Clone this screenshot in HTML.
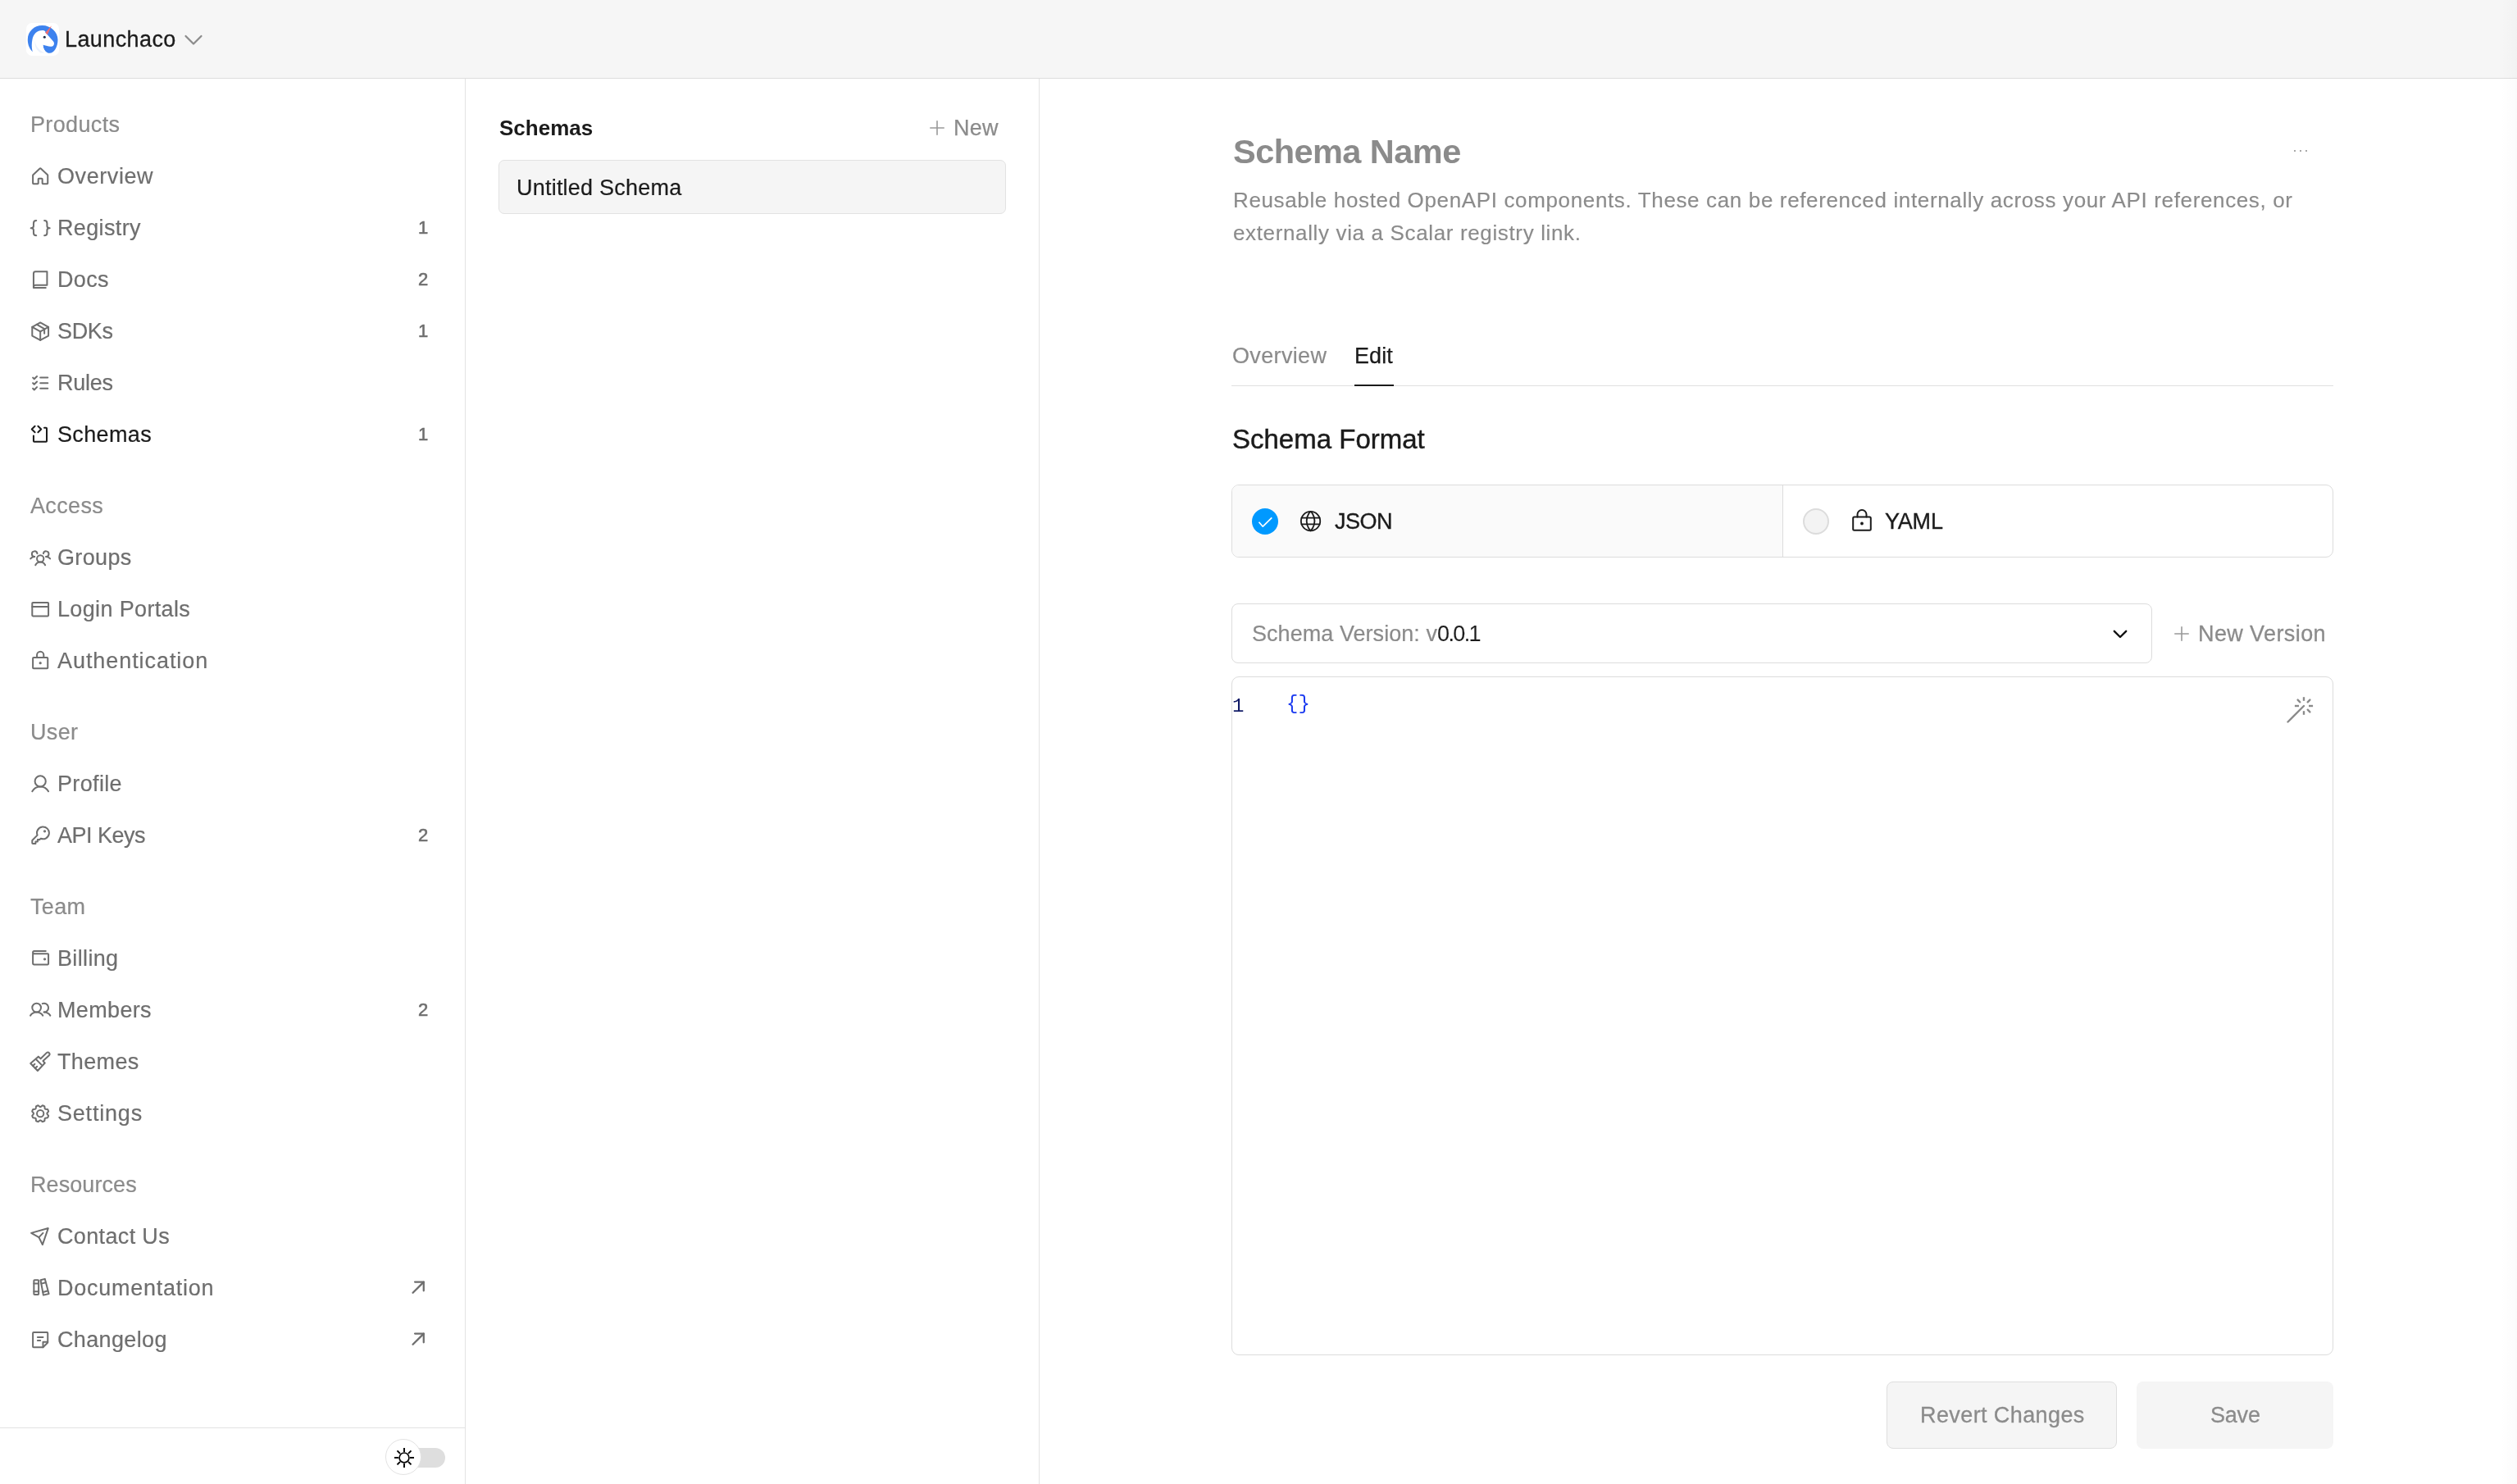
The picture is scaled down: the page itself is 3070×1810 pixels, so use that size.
<!DOCTYPE html>
<html><head><meta charset="utf-8"><title>Schemas</title>
<style>
html,body{margin:0;padding:0;overflow:hidden;}
body{width:3070px;height:1810px;overflow:hidden;position:relative;background:#fff;font-family:"Liberation Sans", sans-serif;}
.t{position:absolute;white-space:nowrap;line-height:1;will-change:transform;}
.r{position:absolute;}
.i{position:absolute;overflow:visible;}
@media (max-width:2000px){html{zoom:0.5;}}
</style></head><body>
<div class="r" style="left:0px;top:0px;width:3070px;height:95px;background:#f6f6f6"></div>
<div class="r" style="left:0px;top:95px;width:3070px;height:1px;background:#dedede"></div>
<div class="r" style="left:32px;top:28px;width:40px;height:40px;background:#fff;border-radius:7px"></div>
<svg class="i" style="left:32px;top:28px" width="40" height="40" viewBox="32 28 40 40">
<path d="M39.6 63 C35 58.5 33.8 53 33.8 48 C33.8 38.5 41.5 31 51.5 31 C62 31 70.5 39 70.5 48.5 C70.5 57.5 66 64.8 60.5 64.8 C56.3 64.8 52.8 60.5 52.3 54.7 C47 56 41 60 39.6 63 Z" fill="#3d82ee"/>
<path d="M39.6 62.4 C38.4 58 38.6 52.5 39.4 48.5 C40.5 41.5 45.5 37.2 51.5 37.1 C53 37.1 54.5 37.6 55.3 38.2 L55.2 39.6 L57.8 42.2 L64.8 50.3 C66.6 52.2 66.3 55.2 64.4 56.2 C62.5 57.1 59.6 56.8 57.4 56.1 L52.4 54.8 C52.6 59.5 54.8 62.8 57.5 64.6 L41 64.6 Z" fill="#ffffff"/>
<path d="M42.6 49.5 C43.3 56 47.5 61.5 54.5 64.4 L49.5 64.4 C44.5 61.5 41.8 56.5 42.6 49.5 Z" fill="#edf3fd"/>
<path d="M55.2 39.8 L62.9 31.2 L57.9 42.4 Z" fill="#ee6e72"/>
<circle cx="54.3" cy="45.3" r="1.5" fill="#1d2a44"/>
</svg>
<div class="t" style="left:79.0px;top:35.1px;font-size:27px;color:#1b1b1b;font-weight:400;letter-spacing:0.4px;-webkit-text-stroke:0.3px #1b1b1b">Launchaco</div>
<svg class="i" style="left:225px;top:42px;" width="22" height="14" viewBox="0 0 22 14" fill="none" stroke="#8b8b8b" stroke-width="2.2" stroke-linecap="round" stroke-linejoin="round"><path d="M1.5 2 L11 11.5 L20.5 2"/></svg>
<div class="r" style="left:567px;top:96px;width:1px;height:1714px;background:#e3e3e3"></div>
<div class="r" style="left:1267px;top:96px;width:1px;height:1714px;background:#e3e3e3"></div>
<div class="r" style="left:0px;top:1741px;width:567px;height:1px;background:#e3e3e3"></div>
<div class="r" style="left:3050px;top:0px;width:20px;height:1810px;background:linear-gradient(to right, rgba(0,0,0,0), rgba(0,0,0,0.015))"></div>
<div class="t" style="left:36.5px;top:138.8px;font-size:27px;color:#8b8b8b;font-weight:400;letter-spacing:0.35px;-webkit-text-stroke:0.2px #8b8b8b">Products</div>
<svg class="i" style="left:35.70px;top:201.80px" width="26.37" height="26.37" viewBox="0 0 256 256" fill="none" stroke="#6e6e6e" stroke-width="19.5" stroke-linecap="round" stroke-linejoin="round"><path d="M152,208V160a8,8,0,0,0-8-8H112a8,8,0,0,0-8,8v48a8,8,0,0,1-8,8H48a8,8,0,0,1-8-8V115.54a8,8,0,0,1,2.62-5.92l80-75.54a8,8,0,0,1,10.77,0l80,75.54a8,8,0,0,1,2.62,5.92V208a8,8,0,0,1-8,8H160A8,8,0,0,1,152,208Z"/></svg>
<div class="t" style="left:70.0px;top:201.8px;font-size:27px;color:#6e6e6e;font-weight:400;letter-spacing:0.58px;-webkit-text-stroke:0.2px #6e6e6e">Overview</div>
<svg class="i" style="left:35.70px;top:264.80px" width="26.37" height="26.37" viewBox="0 0 256 256" fill="none" stroke="#6e6e6e" stroke-width="19.5" stroke-linecap="round" stroke-linejoin="round"><path d="M80,40C56,40 48,48 48,72V104C48,120 40,128 16,128C40,128 48,136 48,152V184C48,208 56,216 80,216"/><path d="M176,40C200,40 208,48 208,72V104C208,120 216,128 240,128C216,128 208,136 208,152V184C208,208 200,216 176,216"/></svg>
<div class="t" style="left:70.0px;top:264.8px;font-size:27px;color:#6e6e6e;font-weight:400;letter-spacing:0.35px;-webkit-text-stroke:0.2px #6e6e6e">Registry</div>
<div class="t" style="left:510.3px;top:266.6px;font-size:22px;color:#6e6e6e;font-weight:400;letter-spacing:0px;-webkit-text-stroke:0.55px #6e6e6e">1</div>
<svg class="i" style="left:35.70px;top:327.80px" width="26.37" height="26.37" viewBox="0 0 256 256" fill="none" stroke="#6e6e6e" stroke-width="19.5" stroke-linecap="round" stroke-linejoin="round"><path d="M48,216a24,24,0,0,1,24-24H208V32H72A24,24,0,0,0,48,56Z"/><path d="M48,216v8H192"/></svg>
<div class="t" style="left:70.0px;top:327.8px;font-size:27px;color:#6e6e6e;font-weight:400;letter-spacing:0.35px;-webkit-text-stroke:0.2px #6e6e6e">Docs</div>
<div class="t" style="left:510.3px;top:329.6px;font-size:22px;color:#6e6e6e;font-weight:400;letter-spacing:0px;-webkit-text-stroke:0.55px #6e6e6e">2</div>
<svg class="i" style="left:35.70px;top:390.80px" width="26.37" height="26.37" viewBox="0 0 256 256" fill="none" stroke="#6e6e6e" stroke-width="19.5" stroke-linecap="round" stroke-linejoin="round"><path d="M128,24L224,76V180L128,232L32,180V76Z"/><path d="M32,76L128,129L224,76"/><path d="M128,129V232"/><path d="M84,46L176,98V152"/></svg>
<div class="t" style="left:70.0px;top:390.8px;font-size:27px;color:#6e6e6e;font-weight:400;letter-spacing:-0.33px;-webkit-text-stroke:0.2px #6e6e6e">SDKs</div>
<div class="t" style="left:510.3px;top:392.6px;font-size:22px;color:#6e6e6e;font-weight:400;letter-spacing:0px;-webkit-text-stroke:0.55px #6e6e6e">1</div>
<svg class="i" style="left:35.70px;top:453.80px" width="26.37" height="26.37" viewBox="0 0 256 256" fill="none" stroke="#6e6e6e" stroke-width="19.5" stroke-linecap="round" stroke-linejoin="round"><path d="M128,128h88"/><path d="M128,64h88"/><path d="M128,192h88"/><path d="M40,64l16,16L88,48"/><path d="M40,128l16,16,32-32"/><path d="M40,192l16,16,32-32"/></svg>
<div class="t" style="left:70.0px;top:453.8px;font-size:27px;color:#6e6e6e;font-weight:400;letter-spacing:-0.27px;-webkit-text-stroke:0.2px #6e6e6e">Rules</div>
<svg class="i" style="left:35.70px;top:516.80px" width="26.37" height="26.37" viewBox="0 0 256 256" fill="none" stroke="#1b1b1b" stroke-width="19.5" stroke-linecap="round" stroke-linejoin="round"><path d="M64,27L27,63L64,99"/><path d="M101,27L138,63L101,99"/><path d="M175,47H196a8,8,0,0,1,8,8V203a8,8,0,0,1-8,8H56a8,8,0,0,1-8-8V140"/></svg>
<div class="t" style="left:70.0px;top:516.8px;font-size:27px;color:#1b1b1b;font-weight:400;letter-spacing:0.35px;-webkit-text-stroke:0.2px #1b1b1b">Schemas</div>
<div class="t" style="left:510.3px;top:518.6px;font-size:22px;color:#6e6e6e;font-weight:400;letter-spacing:0px;-webkit-text-stroke:0.55px #6e6e6e">1</div>
<div class="t" style="left:36.5px;top:603.8px;font-size:27px;color:#8b8b8b;font-weight:400;letter-spacing:0.35px;-webkit-text-stroke:0.2px #8b8b8b">Access</div>
<svg class="i" style="left:35.70px;top:667.30px" width="26.37" height="26.37" viewBox="0 0 256 256" fill="none" stroke="#6e6e6e" stroke-width="19.5" stroke-linecap="round" stroke-linejoin="round"><circle cx="128" cy="140" r="40"/><path d="M196,116a59.8,59.8,0,0,1,48,24"/><path d="M12,140a59.8,59.8,0,0,1,48-24"/><path d="M70.4,216a64.07,64.07,0,0,1,115.2,0"/><path d="M60,116A32,32,0,1,1,91.6,78.78"/><path d="M164.4,78.78A32,32,0,1,1,196,116"/></svg>
<div class="t" style="left:70.0px;top:666.8px;font-size:27px;color:#6e6e6e;font-weight:400;letter-spacing:0.35px;-webkit-text-stroke:0.2px #6e6e6e">Groups</div>
<svg class="i" style="left:35.70px;top:729.80px" width="26.37" height="26.37" viewBox="0 0 256 256" fill="none" stroke="#6e6e6e" stroke-width="19.5" stroke-linecap="round" stroke-linejoin="round"><rect x="32" y="48" width="192" height="160" rx="8"/><path d="M32,96H224"/></svg>
<div class="t" style="left:70.0px;top:729.8px;font-size:27px;color:#6e6e6e;font-weight:400;letter-spacing:0.35px;-webkit-text-stroke:0.2px #6e6e6e">Login Portals</div>
<svg class="i" style="left:35.70px;top:792.80px" width="26.37" height="26.37" viewBox="0 0 256 256" fill="none" stroke="#6e6e6e" stroke-width="19.5" stroke-linecap="round" stroke-linejoin="round"><rect x="40" y="88" width="176" height="128" rx="8"/><path d="M88,88V56a40,40,0,0,1,80,0V88"/><circle cx="128" cy="152" r="6" fill="#6e6e6e"/></svg>
<div class="t" style="left:70.0px;top:792.8px;font-size:27px;color:#6e6e6e;font-weight:400;letter-spacing:0.93px;-webkit-text-stroke:0.2px #6e6e6e">Authentication</div>
<div class="t" style="left:36.5px;top:879.8px;font-size:27px;color:#8b8b8b;font-weight:400;letter-spacing:0.35px;-webkit-text-stroke:0.2px #8b8b8b">User</div>
<svg class="i" style="left:35.70px;top:942.80px" width="26.37" height="26.37" viewBox="0 0 256 256" fill="none" stroke="#6e6e6e" stroke-width="19.5" stroke-linecap="round" stroke-linejoin="round"><circle cx="128" cy="96" r="64"/><path d="M32,216c19.37-33.47,54.55-56,96-56s76.63,22.53,96,56"/></svg>
<div class="t" style="left:70.0px;top:942.8px;font-size:27px;color:#6e6e6e;font-weight:400;letter-spacing:0.35px;-webkit-text-stroke:0.2px #6e6e6e">Profile</div>
<svg class="i" style="left:35.70px;top:1005.80px" width="26.37" height="26.37" viewBox="0 0 256 256" fill="none" stroke="#6e6e6e" stroke-width="19.5" stroke-linecap="round" stroke-linejoin="round"><path d="M93.17,122.83a72,72,0,1,1,40,40h0L120,176H96v24H72v24H40a8,8,0,0,1-8-8V187.31a8,8,0,0,1,2.34-5.65l58.83-58.83Z"/><circle cx="180" cy="76" r="6" fill="#6e6e6e"/></svg>
<div class="t" style="left:70.0px;top:1005.8px;font-size:27px;color:#6e6e6e;font-weight:400;letter-spacing:-0.5px;-webkit-text-stroke:0.2px #6e6e6e">API Keys</div>
<div class="t" style="left:510.3px;top:1007.6px;font-size:22px;color:#6e6e6e;font-weight:400;letter-spacing:0px;-webkit-text-stroke:0.55px #6e6e6e">2</div>
<div class="t" style="left:36.5px;top:1092.8px;font-size:27px;color:#8b8b8b;font-weight:400;letter-spacing:0.35px;-webkit-text-stroke:0.2px #8b8b8b">Team</div>
<svg class="i" style="left:35.70px;top:1154.80px" width="26.37" height="26.37" viewBox="0 0 256 256" fill="none" stroke="#6e6e6e" stroke-width="19.5" stroke-linecap="round" stroke-linejoin="round"><path d="M40,64V192a16,16,0,0,0,16,16H216a8,8,0,0,0,8-8V88a8,8,0,0,0-8-8H56A16,16,0,0,1,40,64h0A16,16,0,0,1,56,48H192"/><circle cx="180" cy="144" r="6" fill="#6e6e6e"/></svg>
<div class="t" style="left:70.0px;top:1155.8px;font-size:27px;color:#6e6e6e;font-weight:400;letter-spacing:0.35px;-webkit-text-stroke:0.2px #6e6e6e">Billing</div>
<svg class="i" style="left:35.70px;top:1218.20px" width="26.37" height="26.37" viewBox="0 0 256 256" fill="none" stroke="#6e6e6e" stroke-width="19.5" stroke-linecap="round" stroke-linejoin="round"><circle cx="84" cy="108" r="52"/><path d="M10.23,200a88,88,0,0,1,147.54,0"/><path d="M172,160a87.93,87.93,0,0,1,73.77,40"/><path d="M152.69,59.7A52,52,0,1,1,172,160"/></svg>
<div class="t" style="left:70.0px;top:1218.8px;font-size:27px;color:#6e6e6e;font-weight:400;letter-spacing:0.35px;-webkit-text-stroke:0.2px #6e6e6e">Members</div>
<div class="t" style="left:510.3px;top:1220.6px;font-size:22px;color:#6e6e6e;font-weight:400;letter-spacing:0px;-webkit-text-stroke:0.55px #6e6e6e">2</div>
<svg class="i" style="left:35.70px;top:1280.40px" width="26.37" height="26.37" viewBox="0 0 256 256" fill="none" stroke="#6e6e6e" stroke-width="19.5" stroke-linecap="round" stroke-linejoin="round"><path d="M12,165L105,84L132,110L202,40C211,31 225,32 232,41C240,50 240,62 232,70L160,137L182,160L96,253Z"/><path d="M82,122L141,181"/><path d="M40,194L62,172"/><path d="M67,223L89,201"/></svg>
<div class="t" style="left:70.0px;top:1281.8px;font-size:27px;color:#6e6e6e;font-weight:400;letter-spacing:0.35px;-webkit-text-stroke:0.2px #6e6e6e">Themes</div>
<svg class="i" style="left:35.70px;top:1344.60px" width="26.37" height="26.37" viewBox="0 0 256 256" fill="none" stroke="#6e6e6e" stroke-width="19.5" stroke-linecap="round" stroke-linejoin="round"><circle cx="128" cy="128" r="40"/><path d="M41.43,178.09A99.14,99.14,0,0,1,31.36,153.8l16.78-21a81.59,81.59,0,0,1,0-9.64l-16.77-21a99.43,99.43,0,0,1,10.05-24.3l26.71-3a81,81,0,0,1,6.81-6.81l3-26.7A99.14,99.14,0,0,1,102.2,31.36l21,16.78a81.59,81.59,0,0,1,9.64,0l21-16.77a99.43,99.43,0,0,1,24.3,10.05l3,26.71a81,81,0,0,1,6.81,6.81l26.7,3a99.14,99.14,0,0,1,10.07,24.29l-16.78,21a81.59,81.59,0,0,1,0,9.64l16.77,21a99.43,99.43,0,0,1-10,24.3l-26.71,3a81,81,0,0,1-6.81,6.81l-3,26.7a99.14,99.14,0,0,1-24.29,10.07l-21-16.78a81.59,81.59,0,0,1-9.64,0l-21,16.77a99.43,99.43,0,0,1-24.3-10l-3-26.71a81,81,0,0,1-6.81-6.81Z"/></svg>
<div class="t" style="left:70.0px;top:1344.8px;font-size:27px;color:#6e6e6e;font-weight:400;letter-spacing:0.8px;-webkit-text-stroke:0.2px #6e6e6e">Settings</div>
<div class="t" style="left:36.5px;top:1431.8px;font-size:27px;color:#8b8b8b;font-weight:400;letter-spacing:0.08px;-webkit-text-stroke:0.2px #8b8b8b">Resources</div>
<svg class="i" style="left:35.70px;top:1494.80px" width="26.37" height="26.37" viewBox="0 0 256 256" fill="none" stroke="#6e6e6e" stroke-width="19.5" stroke-linecap="round" stroke-linejoin="round"><path d="M221,30L20,86L111,137L154,224Z"/><path d="M111,137L160,86"/></svg>
<div class="t" style="left:70.0px;top:1494.8px;font-size:27px;color:#6e6e6e;font-weight:400;letter-spacing:0.35px;-webkit-text-stroke:0.2px #6e6e6e">Contact Us</div>
<svg class="i" style="left:35.70px;top:1557.80px" width="26.37" height="26.37" viewBox="0 0 256 256" fill="none" stroke="#6e6e6e" stroke-width="19.5" stroke-linecap="round" stroke-linejoin="round"><rect x="52" y="32" width="56" height="172" rx="8"/><path d="M52,72H108"/><path d="M52,168H108"/><path d="M131,32L182,18L229,194L164,210Z"/><path d="M141,74L192,60"/><path d="M159,174L212,160"/></svg>
<div class="t" style="left:70.0px;top:1557.8px;font-size:27px;color:#6e6e6e;font-weight:400;letter-spacing:0.75px;-webkit-text-stroke:0.2px #6e6e6e">Documentation</div>
<svg class="i" style="left:496.70px;top:1556.90px" width="26.37" height="26.37" viewBox="0 0 256 256" fill="none" stroke="#6e6e6e" stroke-width="22" stroke-linecap="round" stroke-linejoin="round"><path d="M64,192,192,64"/><path d="M88,64H192V168"/></svg>
<svg class="i" style="left:35.70px;top:1620.80px" width="26.37" height="26.37" viewBox="0 0 256 256" fill="none" stroke="#6e6e6e" stroke-width="19.5" stroke-linecap="round" stroke-linejoin="round"><path d="M156.69,216H48a8,8,0,0,1-8-8V48a8,8,0,0,1,8-8H208a8,8,0,0,1,8,8V156.69a8,8,0,0,1-2.34,5.65l-51.32,51.32A8,8,0,0,1,156.69,216Z"/><path d="M96,96h64"/><path d="M96,136h32"/><path d="M215.28,152H160v63.28"/></svg>
<div class="t" style="left:70.0px;top:1620.8px;font-size:27px;color:#6e6e6e;font-weight:400;letter-spacing:0.35px;-webkit-text-stroke:0.2px #6e6e6e">Changelog</div>
<svg class="i" style="left:496.70px;top:1619.90px" width="26.37" height="26.37" viewBox="0 0 256 256" fill="none" stroke="#6e6e6e" stroke-width="22" stroke-linecap="round" stroke-linejoin="round"><path d="M64,192,192,64"/><path d="M88,64H192V168"/></svg>
<div class="r" style="left:478px;top:1766px;width:65px;height:24px;background:#dedede;border-radius:12px"></div>
<div class="r" style="left:470px;top:1755px;width:44px;height:44px;border-radius:50%;background:#fff;border:1px solid #e2e2e2;box-sizing:border-box"></div>
<svg class="i" style="left:479px;top:1764px;stroke-linecap:butt" width="28" height="28" viewBox="479 1764 28 28" fill="none" stroke="#000" stroke-width="1.9" stroke-linecap="round" stroke-linejoin="round"><circle cx="493" cy="1777.9" r="5.9" stroke-width="1.7"/><path d="M493 1765.9 V1770.9"/><path d="M493 1784.9 V1789.9"/><path d="M481 1777.9 H486"/><path d="M500 1777.9 H505"/><path d="M484.5 1769.4 L488 1772.9"/><path d="M498 1782.9 L501.5 1786.4"/><path d="M484.5 1786.4 L488 1782.9"/><path d="M498 1772.9 L501.5 1769.4"/></svg>
<div class="t" style="left:609.0px;top:143.2px;font-size:26px;color:#1b1b1b;font-weight:700;letter-spacing:0px;">Schemas</div>
<svg class="i" style="left:1134px;top:147px;" width="18" height="18" viewBox="0 0 18 18" fill="none" stroke="#999" stroke-width="1.6" stroke-linecap="round" stroke-linejoin="round"><path d="M9 0.8 V17.2"/><path d="M0.8 9 H17.2"/></svg>
<div class="t" style="left:1163.0px;top:142.7px;font-size:27px;color:#8b8b8b;font-weight:400;letter-spacing:0.3px;-webkit-text-stroke:0.25px #8b8b8b">New</div>
<div class="r" style="left:608px;top:195px;width:619px;height:66px;background:#f5f5f5;border:1px solid #e2e2e2;border-radius:7px;box-sizing:border-box"></div>
<div class="t" style="left:630.0px;top:215.9px;font-size:27px;color:#1b1b1b;font-weight:400;letter-spacing:0.22px;-webkit-text-stroke:0.2px #1b1b1b">Untitled Schema</div>
<div class="t" style="left:1504.0px;top:164.1px;font-size:41.5px;color:#8b8b8b;font-weight:700;letter-spacing:-0.55px;">Schema Name</div>
<div class="r" style="left:2798px;top:183px;width:2px;height:2px;background:#8b8b8b;border-radius:1px"></div>
<div class="r" style="left:2805px;top:183px;width:2px;height:2px;background:#8b8b8b;border-radius:1px"></div>
<div class="r" style="left:2812px;top:183px;width:2px;height:2px;background:#8b8b8b;border-radius:1px"></div>
<div class="t" style="left:1503.5px;top:231.3px;font-size:26px;color:#8b8b8b;font-weight:400;letter-spacing:0.64px;-webkit-text-stroke:0.15px #8b8b8b">Reusable hosted OpenAPI components. These can be referenced internally across your API references, or</div>
<div class="t" style="left:1503.5px;top:270.6px;font-size:26px;color:#8b8b8b;font-weight:400;letter-spacing:0.64px;-webkit-text-stroke:0.15px #8b8b8b">externally via a Scalar registry link.</div>
<div class="t" style="left:1503.0px;top:420.6px;font-size:27px;color:#8b8b8b;font-weight:400;letter-spacing:0.35px;-webkit-text-stroke:0.2px #8b8b8b">Overview</div>
<div class="t" style="left:1651.5px;top:420.6px;font-size:27px;color:#1b1b1b;font-weight:400;letter-spacing:0.1px;-webkit-text-stroke:0.25px #1b1b1b">Edit</div>
<div class="r" style="left:1502px;top:470px;width:1344px;height:1px;background:#e0e0e0"></div>
<div class="r" style="left:1652px;top:469px;width:48px;height:2px;background:#1b1b1b"></div>
<div class="t" style="left:1503.0px;top:519.1px;font-size:33px;color:#1b1b1b;font-weight:400;letter-spacing:0.0px;-webkit-text-stroke:0.45px #1b1b1b">Schema Format</div>
<div class="r" style="left:1502px;top:591px;width:1344px;height:89px;border:1px solid #dcdcdc;border-radius:9px;box-sizing:border-box;overflow:hidden;background:#fff"><div style="position:absolute;left:0;top:0;width:671px;height:100%;background:#fafafa;border-right:1px solid #dcdcdc"></div></div>
<div class="r" style="left:1527px;top:620px;width:32px;height:32px;border-radius:50%;background:#0099ff"></div>
<svg class="i" style="left:1527px;top:620px;stroke-linecap:butt" width="32" height="32" viewBox="0 0 32 32" fill="none" stroke="#fff" stroke-width="1.7" stroke-linecap="round" stroke-linejoin="round"><path d="M8.5 16.8 L13.3 22.2 L24.3 11.3"/></svg>
<svg class="i" style="left:1583.44px;top:620.44px" width="31.13" height="31.13" viewBox="0 0 256 256" fill="none" stroke="#1b1b1b" stroke-width="15" stroke-linecap="round" stroke-linejoin="round"><circle cx="128" cy="128" r="96"/><path d="M37.46,96H218.54"/><path d="M37.46,160H218.54"/><path d="M168,128c0,64-40,96-40,96s-40-32-40-96,40-96,40-96S168,64,168,128Z"/></svg>
<div class="t" style="left:1628.0px;top:622.8px;font-size:27px;color:#1b1b1b;font-weight:400;letter-spacing:-0.5px;-webkit-text-stroke:0.35px #1b1b1b">JSON</div>
<div class="r" style="left:2199px;top:620px;width:32px;height:32px;border-radius:50%;background:#f3f3f3;border:2px solid #dcdcdc;box-sizing:border-box"></div>
<svg class="i" style="left:2259px;top:621px;" width="24" height="27" viewBox="0 0 24 27" fill="none" stroke="#1b1b1b" stroke-width="2" stroke-linecap="round" stroke-linejoin="round"><rect x="1.2" y="9.5" width="21.6" height="16.3" rx="1.5"/><path d="M6.5 9.5 V6.5 A5.5 5.5 0 0 1 17.5 6.5 V9.5"/><circle cx="12" cy="17.5" r="0.9" fill="#1b1b1b"/></svg>
<div class="t" style="left:2299.0px;top:622.9px;font-size:27px;color:#1b1b1b;font-weight:400;letter-spacing:-0.2px;-webkit-text-stroke:0.35px #1b1b1b">YAML</div>
<div class="r" style="left:1502px;top:736px;width:1123px;height:73px;border:1px solid #dcdcdc;border-radius:8px;box-sizing:border-box;background:#fff"></div>
<div class="t" style="left:1527.0px;top:759.9px;font-size:27px;color:#8b8b8b;font-weight:400;letter-spacing:0.05px;-webkit-text-stroke:0.2px #8b8b8b">Schema Version: v<span style="color:#1b1b1b;letter-spacing:-1.6px">0.0.1</span></div>
<svg class="i" style="left:2577px;top:768px;" width="18" height="12" viewBox="0 0 18 12" fill="none" stroke="#111" stroke-width="2.4" stroke-linecap="round" stroke-linejoin="round"><path d="M1.8 1.8 L9 9 L16.2 1.8"/></svg>
<svg class="i" style="left:2652px;top:764px;" width="18" height="18" viewBox="0 0 18 18" fill="none" stroke="#999" stroke-width="1.6" stroke-linecap="round" stroke-linejoin="round"><path d="M9 0.8 V17.2"/><path d="M0.8 9 H17.2"/></svg>
<div class="t" style="left:2681.0px;top:759.9px;font-size:27px;color:#8b8b8b;font-weight:400;letter-spacing:0.4px;-webkit-text-stroke:0.3px #8b8b8b">New Version</div>
<div class="r" style="left:1502px;top:825px;width:1344px;height:828px;border:1px solid #dcdcdc;border-radius:9px;box-sizing:border-box;background:#fff"></div>
<div class="t" style="left:1503.0px;top:849.6px;font-size:24px;color:#101a66;font-weight:400;letter-spacing:0px;font-family:'Liberation Mono',monospace">1</div>
<div class="t" style="left:1569.0px;top:847.4px;font-size:24px;color:#1b3af0;font-weight:400;letter-spacing:0px;font-family:'Liberation Mono',monospace">{}</div>
<svg class="i" style="left:2786px;top:848px;" width="38" height="38" viewBox="2786 848 38 38" fill="none" stroke="#8b8b8b" stroke-width="2.4" stroke-linecap="round" stroke-linejoin="round"><g stroke-linecap="butt"><path d="M2810 850.2 V854.8"/><path d="M2810 867.2 V871.8"/><path d="M2798.9 861 H2804"/><path d="M2816 861 H2821.1"/></g><path d="M2802.6 853.6 L2805.3 856.3"/><path d="M2817.4 853.6 L2814.7 856.3"/><path d="M2817.4 868.4 L2814.7 865.7"/><path d="M2810 861 L2790.5 880.5"/></svg>
<div class="r" style="left:2301px;top:1685px;width:281px;height:82px;background:#f5f5f5;border:1px solid #dedede;border-radius:8px;box-sizing:border-box"></div>
<div class="t" style="left:2342.0px;top:1712.9px;font-size:27px;color:#8b8b8b;font-weight:400;letter-spacing:0.4px;-webkit-text-stroke:0.3px #8b8b8b">Revert Changes</div>
<div class="r" style="left:2606px;top:1685px;width:240px;height:82px;background:#f5f5f5;border-radius:8px"></div>
<div class="t" style="left:2696.0px;top:1712.9px;font-size:27px;color:#8b8b8b;font-weight:400;letter-spacing:-0.2px;-webkit-text-stroke:0.3px #8b8b8b">Save</div>
</body></html>
